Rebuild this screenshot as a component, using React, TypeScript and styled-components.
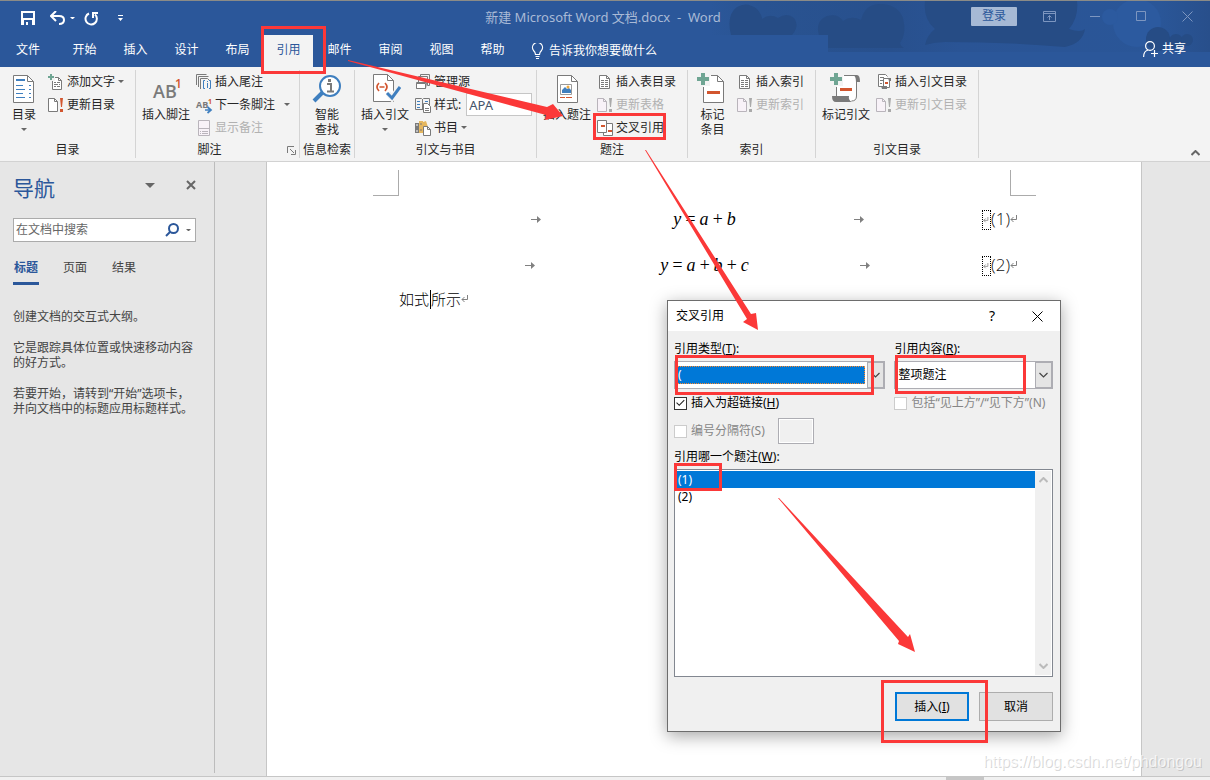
import React from "react";
import styled, { createGlobalStyle, css } from "styled-components";

const GlobalStyle = createGlobalStyle`
  * { box-sizing: border-box; }
  body {
    margin: 0;
    font-family: "Noto Sans", "Noto Sans CJK SC", sans-serif;
    font-size: 12px;
    line-height: 16px;
    color: #262626;
  }
  button, input, select { font: inherit; color: inherit; }
  button { background: none; border: 0; padding: 0; }
  h2, p, ul { margin: 0; padding: 0; }
  svg { display: block; flex: none; }
`;

const RED = "#fb3838";
const GRAY = "#7a7a7a";
const BLUE = "#3f7fbf";
const ORANGE = "#d2562f";
const GREEN = "#6fa593";
const FADED = "#b9b4bb";

const Window = styled.div`
  position: relative;
  min-height: 100vh;
  display: flex;
  flex-direction: column;
  background: #e6e6e6;
  overflow: hidden;
`;

/* ---------- header ---------- */

const Header = styled.header`
  position: relative;
  background: #2b579a;
  border-top: 1px solid #8b8b87;
`;

const Decoration = styled.svg`
  position: absolute;
  top: 0;
  right: 0;
`;

const TitleRow = styled.div`
  position: relative;
  display: grid;
  grid-template-columns: 1fr auto 1fr;
  align-items: center;
  height: 34px;
`;

const QuickAccess = styled.div`
  display: flex;
  align-items: center;
  padding-left: 20px;
`;

const QuickButton = styled.button<{ $w: number }>`
  width: ${(p) => p.$w}px;
  height: 20px;
  display: flex;
  align-items: center;
`;

const DocTitle = styled.div`
  padding: 0 4px 2px 0;
  font-size: 13px;
  color: #a9bad6;
  white-space: pre;
`;

const WindowControls = styled.div`
  display: flex;
  justify-content: flex-end;
  align-items: center;
  padding-bottom: 4px;
`;

const LoginButton = styled.button`
  width: 46px;
  height: 19px;
  margin-right: 9px;
  background: #a6b9d5;
  color: #2b579a;
  border-radius: 1px;
`;

const ControlButton = styled.button`
  width: 46px;
  height: 30px;
  display: flex;
  align-items: center;
  justify-content: center;
`;

const TabRow = styled.nav`
  position: relative;
  display: flex;
  align-items: stretch;
  gap: 2px;
  height: 32px;
  color: #fff;
`;

const Tab = styled.button<{ $active?: boolean; $file?: boolean }>`
  width: ${(p) => (p.$file ? 58 : 49)}px;
  padding: 0 ${(p) => (p.$file ? 2 : 0)}px 2px 0;
  ${(p) =>
    p.$active &&
    css`
      background: #f3f3f3;
      color: #2b579a;
    `}
`;

const TellMe = styled.button`
  display: flex;
  align-items: center;
  gap: 5px;
  margin-left: 12px;
`;

const ShareButton = styled.button`
  display: flex;
  align-items: center;
  gap: 4px;
  margin-left: auto;
  padding: 0 24px 4px 0;
`;

/* ---------- ribbon ---------- */

const Ribbon = styled.section`
  display: flex;
  height: 95px;
  padding: 3px 0 3px;
  background: #f3f3f3;
  border-bottom: 1px solid #d2d2d2;
`;

const Group = styled.div<{ $w: number }>`
  width: ${(p) => p.$w}px;
  flex: none;
  display: flex;
  flex-direction: column;
  border-right: 1px solid #d4d4d4;
`;

const GroupBody = styled.div`
  display: flex;
  flex: none;
  height: 72px;
`;

const GroupLabel = styled.div<{ $launcher?: boolean }>`
  display: flex;
  flex: none;
  align-items: center;
  justify-content: center;
  gap: 65px;
  height: 16px;
  padding-left: ${(p) => (p.$launcher ? 58 : 0)}px;
  white-space: nowrap;
`;

const BigButton = styled.button<{ $w: number }>`
  width: ${(p) => p.$w}px;
  flex: none;
  display: flex;
  flex-direction: column;
  align-items: center;
  padding-top: 1px;
  line-height: 15px;
  white-space: nowrap;
`;

const BigLabel = styled.span`
  margin-top: 4px;
  text-align: center;
`;

const BigCaret = styled.span`
  height: 15px;
  display: flex;
  align-items: center;
`;

const SmallColumn = styled.div`
  display: flex;
  flex-direction: column;
`;

const SmallButton = styled.button<{ $disabled?: boolean }>`
  display: flex;
  align-items: center;
  gap: 3px;
  height: 23px;
  white-space: nowrap;
  color: ${(p) => (p.$disabled ? "#b1b1b1" : "#262626")};
`;

const StyleField = styled.label`
  display: flex;
  align-items: center;
  gap: 3px;
  height: 23px;
  white-space: nowrap;
`;

const StyleInput = styled.input`
  width: 66px;
  height: 23px;
  margin-left: 2px;
  padding: 0 2px;
  background: #fff;
  border: 1px solid #c6c6c6;
  font-size: 13px;
  color: #44546a;
  outline: none;
`;

const CollapseButton = styled.button`
  margin-left: auto;
  align-self: flex-end;
  padding: 0 10px 2px 0;
`;

/* ---------- workspace ---------- */

const Workspace = styled.main`
  position: relative;
  flex: 1;
  display: flex;
`;

const NavPane = styled.aside`
  width: 215px;
  flex: none;
  margin-bottom: 3px;
  padding: 12px 18px 0 13px;
  border-right: 1px solid #bcbcbc;
  color: #444;
`;

const NavHeader = styled.div`
  display: flex;
  align-items: center;
  height: 28px;
  gap: 31px;
`;

const NavTitle = styled.h2`
  flex: 1;
  font-size: 21px;
  line-height: 28px;
  font-weight: 400;
  color: #2b579a;
`;

const IconButton = styled.button`
  display: flex;
  padding-bottom: 6px;
`;

const SearchBox = styled.label`
  display: flex;
  align-items: center;
  gap: 7px;
  height: 24px;
  margin-top: 16px;
  padding: 0 4px 0 2px;
  background: #fff;
  border: 1px solid #ababab;
`;

const SearchInput = styled.input`
  flex: 1;
  min-width: 0;
  padding: 0;
  border: 0;
  outline: none;
  background: none;
  &::placeholder { color: #666; opacity: 1; }
`;

const NavTabs = styled.div`
  display: flex;
  margin-top: 14px;
`;

const NavTab = styled.button<{ $active?: boolean }>`
  height: 29px;
  margin-right: 23px;
  padding-bottom: 2px;
  width: 26px;
  white-space: nowrap;
  border-bottom: 3px solid ${(p) => (p.$active ? "#2b579a" : "transparent")};
  ${(p) =>
    p.$active &&
    css`
      font-weight: 700;
      color: #2b579a;
    `}
`;

const NavText = styled.p`
  margin-top: 16px;
  line-height: 15px;
  white-space: nowrap;
`;

const NavHelp = styled.div`
  padding-top: 8px;
`;

const Page = styled.article`
  flex: 1;
  margin: 0 68px 0 51px;
  background: #fff;
  border: solid #c6c6c6;
  border-width: 0 1px;
`;

const PageCorners = styled.div`
  display: flex;
  justify-content: space-between;
  height: 34px;
  padding: 8px 105px 0 106px;
`;

const Corner = styled.span<{ $side: "left" | "right" }>`
  width: 26px;
  height: 26px;
  border-bottom: 1px solid #ababab;
  border-${(p) => (p.$side === "left" ? "right" : "left")}: 1px solid #ababab;
`;

const PageText = styled.div`
  padding: 0 131px 0 132px;
`;

const EquationRow = styled.div`
  display: grid;
  grid-template-columns: 1fr auto 1fr;
  align-items: center;
  height: 46px;
`;

const TabMark = styled.span`
  flex: 1;
  display: flex;
  justify-content: center;
`;

const Equation = styled.span`
  display: flex;
  gap: 3px;
  font: italic 18px/22px "Liberation Serif", serif;
  color: #000;
`;

const NumberCell = styled.div`
  display: flex;
  align-items: center;
  margin-right: -8px;
`;

const CaptionAnchor = styled.span`
  width: 9px;
  height: 20px;
  display: flex;
  align-items: center;
  margin-top: 2px;
  border: 1px dotted #000;
`;

const CaptionNumber = styled.span`
  font: 300 17px/22px "Open Sans", "Noto Sans", sans-serif;
  color: #111;
`;

const BodyLine = styled.p`
  display: flex;
  align-items: center;
  height: 22px;
  font-size: 15px;
  line-height: 22px;
  font-weight: 300;
  color: #000;
`;

const TextCursor = styled.span`
  width: 1px;
  height: 19px;
  margin-left: 1px;
  background: #000;
`;

const BottomBar = styled.footer`
  height: 4px;
  padding-left: 946px;
  background: #f1f1f1;
  border-top: 1px solid #c6c6c6;
`;

const BottomThumb = styled.div`
  width: 38px;
  height: 3px;
  background: #c6c6c6;
`;

/* ---------- dialog ---------- */

const Dialog = styled.section`
  position: absolute;
  top: 138px;
  left: 667px;
  width: 394px;
  background: #f0f0f0;
  border: 1px solid #6d6d6d;
  box-shadow: 0 4px 16px rgba(0, 0, 0, 0.35);
  color: #000;
`;

const DialogTitle = styled.div`
  display: flex;
  align-items: center;
  height: 30px;
  padding: 0 17px 0 8px;
  background: #fff;
`;

const DialogTitleText = styled.h2`
  flex: 1;
  font-size: 12px;
  font-weight: 400;
`;

const HelpButton = styled.button`
  font-size: 14px;
  margin-right: 37px;
`;

const DialogBody = styled.div`
  padding: 10px 7px 10px 6px;
`;

const FieldRow = styled.div`
  display: flex;
  gap: 9px;
`;

const FieldColumn = styled.div<{ $w: number }>`
  width: ${(p) => p.$w}px;
`;

const FieldLabel = styled.label`
  display: block;
  height: 16px;
`;

const Combo = styled.div`
  display: flex;
  height: 28px;
  margin-top: 4px;
  border: 1px solid #adadb3;
  background: #fff;
`;

const ComboSelect = styled.select<{ $highlight?: boolean }>`
  appearance: none;
  flex: 1;
  min-width: 0;
  margin: 4px 2px;
  padding: 0 1px;
  border: 0;
  outline: none;
  background: transparent;
  ${(p) =>
    p.$highlight &&
    css`
      background: #0078d7;
      color: #fff;
      outline: 1px dotted #ff8728;
      outline-offset: -1px;
    `}
`;

const ComboArrow = styled.span`
  width: 17px;
  display: flex;
  align-items: center;
  justify-content: center;
  background: #e4e4e4;
  border: 1px solid #adadb3;
`;

const CheckRow = styled.div`
  display: flex;
  align-items: center;
  height: 28px;
`;

const CheckLabel = styled.label<{ $disabled?: boolean }>`
  display: flex;
  align-items: center;
  gap: 4px;
  white-space: nowrap;
  color: ${(p) => (p.$disabled ? "#868686" : "#000")};
`;

const CheckBox = styled.input`
  appearance: none;
  position: relative;
  width: 13px;
  height: 13px;
  margin: 0;
  background: #fff;
  border: 1px solid #333;
  &:disabled { border-color: #ccc; }
  &:checked::after {
    content: "";
    position: absolute;
    inset: 1px;
    background: #222;
    clip-path: polygon(2% 50%, 10% 42%, 36% 68%, 88% 14%, 96% 22%, 36% 84%);
  }
`;

const SeparatorInput = styled.input`
  width: 36px;
  height: 26px;
  margin-left: 13px;
  background: #f0f0f0;
  border: 1px solid #adadb3;
  box-shadow: inset 0 0 0 1px #fff;
`;

const ListLabel = styled.div`
  height: 16px;
  margin-top: 4px;
`;

const ListBox = styled.div`
  display: flex;
  height: 208px;
  margin-top: 4px;
  padding: 1px;
  background: #fff;
  border: 1px solid #828790;
`;

const ListItems = styled.ul`
  flex: 1;
  list-style: none;
`;

const ListItem = styled.li<{ $selected?: boolean }>`
  height: 17px;
  padding: 0 2px;
  line-height: 17px;
  background: ${(p) => (p.$selected ? "#0078d7" : "transparent")};
  color: ${(p) => (p.$selected ? "#fff" : "#000")};
`;

const ListScroll = styled.div`
  width: 16px;
  display: flex;
  flex-direction: column;
  justify-content: space-between;
  align-items: center;
  padding: 6px 0;
  background: #f0f0f0;
`;

const DialogActions = styled.div`
  display: flex;
  justify-content: flex-end;
  gap: 10px;
  margin-top: 15px;
`;

const DialogButton = styled.button<{ $primary?: boolean }>`
  width: 74px;
  height: 29px;
  background: #e1e1e1;
  border: ${(p) => (p.$primary ? "2px solid #0078d7" : "1px solid #adadad")};
`;

/* ---------- annotations ---------- */

const AnnotationLayer = styled.svg`
  position: absolute;
  top: 0;
  left: 0;
  pointer-events: none;
`;

const Watermark = styled.div`
  position: absolute;
  right: 8px;
  bottom: 8px;
  font: 16px/20px "Liberation Sans", sans-serif;
  color: rgba(255, 255, 255, 0.7);
  text-shadow: 1px 1px 0 rgba(120, 120, 120, 0.3);
`;

/* ---------- icons ---------- */

const Caret = ({ color = "#666", w = 6 }: { color?: string; w?: number }) => (
  <svg width={w} height={w / 2} viewBox="0 0 6 3">
    <path d="M0 0h6L3 3z" fill={color} />
  </svg>
);

const Big = ({ children }: { children: React.ReactNode }) => (
  <svg width="32" height="32" fill="none">
    {children}
  </svg>
);

const Small = ({ children }: { children: React.ReactNode }) => (
  <svg width="16" height="16" fill="none">
    {children}
  </svg>
);

const TocIcon = () => (
  <Big>
    <path d="M5.500 4.500h14l6 6v21h-20z" fill="#fff" stroke={GRAY} />
    <path d="M19.500 4.500v6h6" stroke={GRAY} />
    <path d="M8 8h9v2H8z" fill={BLUE} />
    <path d="M8 14.500h7M8 18.500h9M8 22.500h7M8 26.500h9" stroke={BLUE} />
    <path d="M21 14.500h2M21 18.500h2M21 22.500h2M21 26.500h2" stroke={BLUE} />
  </Big>
);

const FootnoteIcon = () => (
  <svg width="32" height="32">
    <text x="3" y="27" fontFamily="Open Sans" fontWeight="600" fontSize="18" fill={GRAY}>AB</text>
    <text x="25" y="17" fontFamily="Open Sans" fontWeight="600" fontSize="12" fill={ORANGE}>1</text>
  </svg>
);

const SmartLookupIcon = () => (
  <Big>
    <path d="M12 21L3 30" stroke={BLUE} strokeWidth="4" />
    <circle cx="19" cy="15" r="10" fill="#fff" stroke={BLUE} strokeWidth="2" />
    <path d="M16 13h4v7M16 20.500h7" stroke={GRAY} strokeWidth="2" />
    <rect x="17" y="8" width="3" height="3" fill={GRAY} />
  </Big>
);

const CitationIcon = () => (
  <Big>
    <path d="M4.500 3.500h14l6 6v21h-20z" fill="#fff" stroke={GRAY} />
    <path d="M18.500 3.500v6h6" stroke={GRAY} />
    <path d="M10 12q-4 4 0 8M16 12q4 4 0 8M10.500 16h5" stroke={ORANGE} strokeWidth="1.700" />
    <path d="M19 22l4 5 8-11" stroke="#f3f3f3" strokeWidth="6" />
    <path d="M18 22l5 5 8-11" stroke={BLUE} strokeWidth="3" />
  </Big>
);

const CaptionIcon = () => (
  <Big>
    <path d="M6.500 4.500h14l6 6v21h-20z" fill="#fff" stroke={GRAY} />
    <path d="M20.500 4.500v6h6" stroke={GRAY} />
    <path d="M9.500 13.500h11v10h-11z" stroke="#9a9a9a" />
    <path d="M11 22v-3l3-3 2 2 2-1 2 2v3z" fill={BLUE} />
    <circle cx="17" cy="16" r="1.500" fill="#eda83c" />
    <path d="M9 26.500h5M15 26.500h6" stroke={ORANGE} />
  </Big>
);

const PlusBig = () => (
  <path d="M4 2h4v4h4v4H8v4H4v-4H0V6h4z" fill={GREEN} />
);

const MarkEntryIcon = () => (
  <Big>
    <path d="M6.500 4.500h14l6 6v21h-20z" fill="#fff" />
    <path d="M14 4.500h6.500l6 6v21h-20V16M20.500 4.500v6h6" stroke={GRAY} />
    <path d="M10 21.500h13" stroke={ORANGE} strokeWidth="3" />
    <path d="M0 1h13v14H0z" fill="#f3f3f3" />
    <PlusBig />
  </Big>
);

const MarkCitationIcon = () => (
  <Big>
    <path d="M6.500 4.500h20v20q0 6-5 6h-14z" fill="#fff" />
    <path d="M14 4.500h13M6.500 16v10M26.500 8v17q0 5-5 5" stroke={GRAY} />
    <path d="M23 4h4q3 0 3 7h-4q0-6-3-7z" fill={GRAY} />
    <path d="M2 25h17q-1 4 3 6H6q-4 0-4-6z" fill={GRAY} />
    <path d="M10 18.500h12" stroke={ORANGE} strokeWidth="3" />
    <path d="M0 1h13v14H0z" fill="#f3f3f3" />
    <PlusBig />
  </Big>
);

const AddTextIcon = () => (
  <Small>
    <path d="M4.500 3.500h6l3 3v9h-9z" fill="#fff" stroke={GRAY} />
    <path d="M10.500 3.500v3h3M6 8.500h2M9 8.500h3M6 10.500h4M11 10.500h1M6 12.500h2M9 12.500h3" stroke={GRAY} />
    <path d="M0 0h7v7H0z" fill="#f3f3f3" />
    <path d="M2 0h2v2h2v2H4v2H2V4H0V2h2z" fill={GREEN} />
  </Small>
);

const UpdateIcon = ({ faded = false }: { faded?: boolean }) => {
  const line = faded ? FADED : GRAY;
  const mark = faded ? "#aaa" : ORANGE;
  return (
    <Small>
      <path d="M.500 1.500h6l3 3v10h-9z" fill={faded ? "#f8f2f8" : "#fff"} stroke={line} />
      <path d="M6.500 1.500v3h3" stroke={line} />
      <path d="M12 1h3l-1 9h-1zM12 12h3v3h-3z" fill={mark} />
    </Small>
  );
};

const EndnoteIcon = () => (
  <Small>
    <path d="M.500 11V.500h10M2.500 13V2.500h10M4.500 15V4.500h7l3 3" stroke={GRAY} />
    <path d="M9 6.500H7.500v8H9M13 6.500h1.500v8H13" stroke={BLUE} />
    <path d="M11 7h1v1h-1zM11 9h1v5h-1z" fill={BLUE} />
  </Small>
);

const NextNoteIcon = () => (
  <svg width="16" height="16" overflow="visible">
    <text x="0" y="11" fontFamily="Open Sans" fontWeight="700" fontSize="9" fill={GRAY}>AB</text>
    <text x="12" y="7" fontFamily="Open Sans" fontWeight="700" fontSize="7" fill={ORANGE}>1</text>
    <path d="M9 13h5M11.500 10l3.500 3-3.500 3" fill="none" stroke={BLUE} strokeWidth="1.700" />
  </svg>
);

const ShowNotesIcon = () => (
  <Small>
    <path d="M2.500 .500h11v15h-11z" fill="#f8f2f8" stroke={FADED} />
    <path d="M2 8.500h12M4 11.500h1M6 11.500h6M4 13.500h1M6 13.500h6" stroke={FADED} />
  </Small>
);

const SourcesIcon = () => (
  <Small>
    <path d="M5.500 5V.500h9v11h-2M3.500 8V2.500h9v9M1.500 8.500h10l-1 6h-9z" stroke={GRAY} />
    <path d="M1.500 9.500h9v5h-9z" fill="#fff" stroke={GRAY} />
  </Small>
);

const StyleIcon = () => (
  <Small>
    <path d="M.500 1.500h6l1 1 1-1h6v7M.500 1.500v11h7M7.500 2v11" stroke={GRAY} />
    <path d="M2 4.500h3M2 7.500h3M2 10.500h3M10 4.500h3" stroke={BLUE} />
    <path d="M8.500 6.500h4l3 3v6h-7z" fill="#fff" stroke={GRAY} />
    <path d="M10 11.500h4M10 13.500h4" stroke={GRAY} />
  </Small>
);

const BibliographyIcon = () => (
  <Small>
    <path d="M0 3h4v10H0z" fill={GRAY} />
    <path d="M1 5h2M1 11h2" stroke="#fff" />
    <path d="M4 1h4v12H4z" fill="#e5b75f" />
    <path d="M8 2l3-1 2 6H8z" fill="#e5b75f" />
    <path d="M5 4h2M5 10h2" stroke={GRAY} />
    <path d="M8.500 6.500h4l3 3v6h-7z" fill="#fff" stroke={GRAY} />
    <path d="M12.500 6.500v3h3" stroke={GRAY} />
  </Small>
);

const ListDocIcon = () => (
  <Small>
    <path d="M2.500 1.500h7l3 3v10h-10z" fill="#fff" stroke={GRAY} />
    <path d="M9.500 1.500v3h3M4 6.500h3M8 6.500h3M4 8.500h3M8 8.500h3M4 10.500h3M8 10.500h3M4 12.500h3M8 12.500h3" stroke={GRAY} />
  </Small>
);

const CrossRefIcon = () => (
  <Small>
    <path d="M6.500 3.500h9v12h-9z" fill="#fff" stroke={GRAY} />
    <path d="M.500 .500h9v12h-9z" fill="#fff" stroke={GRAY} />
    <path d="M4 6h4M11 11h4" stroke={ORANGE} strokeWidth="2" />
  </Small>
);

const AuthoritiesIcon = () => (
  <Small>
    <path d="M8 12.500H2.500V.500h7l2 2" fill="#fff" stroke={GRAY} />
    <path d="M4 3.500h4M4 6.500h3M4 9.500h2" stroke={GRAY} />
    <path d="M7.500 4.500h6v9h-6z" fill="#fff" stroke={GRAY} />
    <path d="M12 4h3v3h-2zM5 12h6v3H6z" fill={GRAY} />
    <path d="M9 9h3" stroke={ORANGE} strokeWidth="2" />
  </Small>
);

const TabArrow = () => (
  <svg width="10" height="7">
    <path d="M0 3h6V0l4 3.500L6 7V4H0z" fill="#808080" />
  </svg>
);

const ReturnMark = ({ w = 8 }: { w?: number }) => (
  <svg width={w} height="8" viewBox="0 0 8 8" fill="none">
    <path d="M6.500 0v4.500H1M3.500 2L1 4.500 3.500 7" stroke="#808080" />
  </svg>
);

const Chevron = ({ up = false, color = "#444" }: { up?: boolean; color?: string }) => (
  <svg width="9" height="6" fill="none">
    <path d={up ? "M.500 5l4-4 4 4" : "M.500 1l4 4 4-4"} stroke={color} strokeWidth={color === "#444" ? 1.2 : 2} />
  </svg>
);

/* ---------- pieces ---------- */

const TabMarked = () => (
  <TabMark>
    <TabArrow />
  </TabMark>
);

const EquationLine = ({ terms, n }: { terms: string[]; n: number }) => (
  <EquationRow>
    <TabMarked />
    <Equation>
      {terms.map((t, i) => (
        <span key={i}>{t}</span>
      ))}
    </Equation>
    <NumberCell>
      <TabMarked />
      <CaptionAnchor>
        <ReturnMark w={6} />
      </CaptionAnchor>
      <CaptionNumber>({n})</CaptionNumber>
      <ReturnMark />
    </NumberCell>
  </EquationRow>
);

const ribbonTabs = ["开始", "插入", "设计", "布局", "引用", "邮件", "审阅", "视图", "帮助"];

export default function App() {
  return (
    <Window>
      <GlobalStyle />
      <Header>
        <Decoration width="500" height="51">
          <defs>
            <linearGradient id="sky" x1="0" x2="1">
              <stop offset="0" stopColor="#2b579a" />
              <stop offset="0.1" stopColor="#295391" />
              <stop offset="0.36" stopColor="#28508d" />
              <stop offset="0.5" stopColor="#2a5495" />
              <stop offset="0.9" stopColor="#2a5698" />
              <stop offset="1" stopColor="#284f8b" />
            </linearGradient>
          </defs>
          <path d="M0 0h500v51H118V34H0z" fill="url(#sky)" />
          <g transform="translate(20 0)">
            <circle cx="407" cy="22" r="24" fill="#2c5a9f" />
            <circle cx="380" cy="16" r="8" fill="#2c5a9f" />
            <g fill="#264c85">
              <path d="M1 34q-5-20 6-28 10-6 20 2 5 6 5 10 8-6 16-1 9-6 16 0 6 8-2 17z" />
              <path d="M89 34q-4-14 8-19 11-3 16 5 8-6 18-1 4-17 21-16 16 1 21 14 4 16-3 25 1 4 4 5H98V34z" />
              <path d="M195 0h152q2 16-8 28 12 4 16 0-2 14-20 18-60-5-120-5-10 0-20 3 2-10 10-16-12-10-10-28z" />
              <circle cx="428" cy="38" r="12" />
              <circle cx="446" cy="40" r="7" />
              <circle cx="457" cy="39" r="6" />
            </g>
          </g>
        </Decoration>
        <TitleRow>
          <QuickAccess>
            <QuickButton $w={30} aria-label="保存">
              <svg width="16" height="16" fill="none">
                <path d="M2 2h12v12H2z" stroke="#fff" strokeWidth="2" />
                <path d="M1 8h14v7H1z" fill="#fff" />
                <path d="M4 10h8v5H4z" fill="#2b579a" />
                <path d="M6 12h2v3H6z" fill="#fff" />
              </svg>
            </QuickButton>
            <QuickButton $w={20} aria-label="撤消">
              <svg width="15" height="14" fill="none">
                <path d="M1 5h8q5 0 5 4t-5 4" stroke="#fff" strokeWidth="2" />
                <path d="M6 0L1 5l5 5" stroke="#fff" strokeWidth="2" />
              </svg>
            </QuickButton>
            <QuickButton $w={14} aria-label="撤消选项">
              <Caret color="#fff" w={5} />
            </QuickButton>
            <QuickButton $w={34} aria-label="重复">
              <svg width="15" height="15" fill="none">
                <path d="M5 2.500A5.700 5.700 0 1 0 11 3.500" stroke="#fff" strokeWidth="2" />
                <path d="M9 7V2h5" stroke="#fff" strokeWidth="2" />
              </svg>
            </QuickButton>
            <QuickButton $w={8} aria-label="自定义快速访问工具栏">
              <svg width="5" height="6">
                <path d="M0 0h5v1H0zM0 3h5L2.500 6z" fill="#fff" />
              </svg>
            </QuickButton>
          </QuickAccess>
          <DocTitle>{"新建 Microsoft Word 文档.docx  -  Word"}</DocTitle>
          <WindowControls>
            <LoginButton>登录</LoginButton>
            <ControlButton aria-label="功能区显示选项">
              <svg width="13" height="11" fill="none" stroke="#7d96c0">
                <path d="M.500 .500h12v10H.500zM0 2.500h13M6.500 9V4.500M4.500 6.500l2-2 2 2" />
              </svg>
            </ControlButton>
            <ControlButton aria-label="最小化">
              <svg width="10" height="1">
                <path d="M0 0h10v1H0z" fill="#7d96c0" />
              </svg>
            </ControlButton>
            <ControlButton aria-label="最大化">
              <svg width="10" height="10" fill="none">
                <path d="M.500 .500h9v9h-9z" stroke="#7d96c0" />
              </svg>
            </ControlButton>
            <ControlButton aria-label="关闭">
              <svg width="11" height="11" fill="none">
                <path d="M.500 .500l10 10M10.500 .500l-10 10" stroke="#7d96c0" />
              </svg>
            </ControlButton>
          </WindowControls>
        </TitleRow>
        <TabRow>
          <Tab $file>文件</Tab>
          {ribbonTabs.map((t) => (
            <Tab key={t} $active={t === "引用"}>
              {t}
            </Tab>
          ))}
          <TellMe>
            <svg width="13" height="16" fill="none" stroke="#fff">
              <path d="M4.500 11.500q0-2-2-4a5 5 0 1 1 8 0q-2 2-2 4zM4.500 13.500h4M5 15.500h3" strokeWidth="1.200" />
            </svg>
            告诉我你想要做什么
          </TellMe>
          <ShareButton>
            <svg width="15" height="16" fill="none" stroke="#fff">
              <circle cx="7" cy="5" r="4.400" strokeWidth="1.200" />
              <path d="M.600 16q0-6 4.500-7M8 12.500h7M11.500 9v7" strokeWidth="1.200" />
            </svg>
            共享
          </ShareButton>
        </TabRow>
      </Header>

      <Ribbon>
        <Group $w={136}>
          <GroupBody>
            <BigButton $w={48}>
              <TocIcon />
              <BigLabel>目录</BigLabel>
              <BigCaret><Caret /></BigCaret>
            </BigButton>
            <SmallColumn>
              <SmallButton><AddTextIcon />添加文字<Caret /></SmallButton>
              <SmallButton><UpdateIcon />更新目录</SmallButton>
            </SmallColumn>
          </GroupBody>
          <GroupLabel>目录</GroupLabel>
        </Group>
        <Group $w={164}>
          <GroupBody>
            <BigButton $w={60}>
              <FootnoteIcon />
              <BigLabel>插入脚注</BigLabel>
            </BigButton>
            <SmallColumn>
              <SmallButton><EndnoteIcon />插入尾注</SmallButton>
              <SmallButton><NextNoteIcon />下一条脚注&nbsp;&nbsp;<Caret /></SmallButton>
              <SmallButton $disabled disabled><ShowNotesIcon />显示备注</SmallButton>
            </SmallColumn>
          </GroupBody>
          <GroupLabel $launcher>
            脚注
            <svg width="9" height="9" fill="none">
              <path d="M.500 7V.500H7M3 3l4 4M8.500 4v4.500H4" stroke={GRAY} />
            </svg>
          </GroupLabel>
        </Group>
        <Group $w={55}>
          <GroupBody>
            <BigButton $w={54}>
              <SmartLookupIcon />
              <BigLabel>智能<br />查找</BigLabel>
            </BigButton>
          </GroupBody>
          <GroupLabel>信息检索</GroupLabel>
        </Group>
        <Group $w={182}>
          <GroupBody>
            <BigButton $w={60}>
              <CitationIcon />
              <BigLabel>插入引文</BigLabel>
              <BigCaret><Caret /></BigCaret>
            </BigButton>
            <SmallColumn>
              <SmallButton><SourcesIcon />管理源</SmallButton>
              <StyleField><StyleIcon />样式:<StyleInput defaultValue="APA" /></StyleField>
              <SmallButton><BibliographyIcon />书目<Caret /></SmallButton>
            </SmallColumn>
          </GroupBody>
          <GroupLabel>引文与书目</GroupLabel>
        </Group>
        <Group $w={151}>
          <GroupBody>
            <BigButton $w={60}>
              <CaptionIcon />
              <BigLabel>插入题注</BigLabel>
            </BigButton>
            <SmallColumn>
              <SmallButton><ListDocIcon />插入表目录</SmallButton>
              <SmallButton $disabled disabled><UpdateIcon faded />更新表格</SmallButton>
              <SmallButton><CrossRefIcon />交叉引用</SmallButton>
            </SmallColumn>
          </GroupBody>
          <GroupLabel>题注</GroupLabel>
        </Group>
        <Group $w={128}>
          <GroupBody>
            <BigButton $w={49}>
              <MarkEntryIcon />
              <BigLabel>标记<br />条目</BigLabel>
            </BigButton>
            <SmallColumn>
              <SmallButton><ListDocIcon />插入索引</SmallButton>
              <SmallButton $disabled disabled><UpdateIcon faded />更新索引</SmallButton>
            </SmallColumn>
          </GroupBody>
          <GroupLabel>索引</GroupLabel>
        </Group>
        <Group $w={163}>
          <GroupBody>
            <BigButton $w={60}>
              <MarkCitationIcon />
              <BigLabel>标记引文</BigLabel>
            </BigButton>
            <SmallColumn>
              <SmallButton><AuthoritiesIcon />插入引文目录</SmallButton>
              <SmallButton $disabled disabled><UpdateIcon faded />更新引文目录</SmallButton>
            </SmallColumn>
          </GroupBody>
          <GroupLabel>引文目录</GroupLabel>
        </Group>
        <CollapseButton aria-label="折叠功能区">
          <Chevron up color="#666" />
        </CollapseButton>
      </Ribbon>

      <Workspace>
        <NavPane>
          <NavHeader>
            <NavTitle>导航</NavTitle>
            <IconButton aria-label="窗格选项"><Caret w={10} /></IconButton>
            <IconButton aria-label="关闭窗格">
              <svg width="10" height="10" fill="none">
                <path d="M1 1l8 8M9 1L1 9" stroke="#666" strokeWidth="2" />
              </svg>
            </IconButton>
          </NavHeader>
          <SearchBox>
            <SearchInput placeholder="在文档中搜索" aria-label="在文档中搜索" />
            <svg width="14" height="14" fill="none" stroke="#2b579a" strokeWidth="2">
              <circle cx="8.500" cy="5.500" r="4.500" />
              <path d="M5 9l-4 4" />
            </svg>
            <Caret w={5} />
          </SearchBox>
          <NavTabs>
            <NavTab $active>标题</NavTab>
            <NavTab>页面</NavTab>
            <NavTab>结果</NavTab>
          </NavTabs>
          <NavHelp>
            <NavText>创建文档的交互式大纲。</NavText>
            <NavText>它是跟踪具体位置或快速移动内容<br />的好方式。</NavText>
            <NavText>若要开始，请转到“开始”选项卡，<br />并向文档中的标题应用标题样式。</NavText>
          </NavHelp>
        </NavPane>
        <Page>
          <PageCorners>
            <Corner $side="left" />
            <Corner $side="right" />
          </PageCorners>
          <PageText>
            <EquationLine terms={["y", "=", "a", "+", "b"]} n={1} />
            <EquationLine terms={["y", "=", "a", "+", "b", "+", "c"]} n={2} />
            <BodyLine>
              如式
              <TextCursor />
              所示
              <ReturnMark />
            </BodyLine>
          </PageText>
        </Page>

        <Dialog role="dialog" aria-label="交叉引用">
          <DialogTitle>
            <DialogTitleText>交叉引用</DialogTitleText>
            <HelpButton>?</HelpButton>
            <button aria-label="关闭">
              <svg width="11" height="11" fill="none">
                <path d="M.500 .500l10 10M10.500 .500l-10 10" stroke="#000" />
              </svg>
            </button>
          </DialogTitle>
          <DialogBody>
            <FieldRow>
              <FieldColumn $w={212}>
                <FieldLabel htmlFor="ref-type">引用类型(<u>T</u>):</FieldLabel>
                <Combo>
                  <ComboSelect id="ref-type" $highlight defaultValue="(">
                    <option>(</option>
                  </ComboSelect>
                  <ComboArrow><Chevron /></ComboArrow>
                </Combo>
              </FieldColumn>
              <FieldColumn $w={159}>
                <FieldLabel htmlFor="ref-content">引用内容(<u>R</u>):</FieldLabel>
                <Combo>
                  <ComboSelect id="ref-content">
                    <option>整项题注</option>
                  </ComboSelect>
                  <ComboArrow><Chevron /></ComboArrow>
                </Combo>
              </FieldColumn>
            </FieldRow>
            <FieldRow>
              <FieldColumn $w={212}>
                <CheckRow>
                  <CheckLabel>
                    <CheckBox type="checkbox" defaultChecked />
                    <span>插入为超链接(<u>H</u>)</span>
                  </CheckLabel>
                </CheckRow>
              </FieldColumn>
              <FieldColumn $w={159}>
                <CheckRow>
                  <CheckLabel $disabled>
                    <CheckBox type="checkbox" disabled />
                    包括“见上方”/“见下方”(N)
                  </CheckLabel>
                </CheckRow>
              </FieldColumn>
            </FieldRow>
            <CheckRow>
              <CheckLabel $disabled>
                <CheckBox type="checkbox" disabled />
                编号分隔符(S)
              </CheckLabel>
              <SeparatorInput disabled aria-label="分隔符" />
            </CheckRow>
            <ListLabel id="caption-list">引用哪一个题注(<u>W</u>):</ListLabel>
            <ListBox>
              <ListItems role="listbox" aria-labelledby="caption-list">
                <ListItem role="option" aria-selected $selected>(1)</ListItem>
                <ListItem role="option">(2)</ListItem>
              </ListItems>
              <ListScroll>
                <Chevron up color="#bbb" />
                <Chevron color="#bbb" />
              </ListScroll>
            </ListBox>
            <DialogActions>
              <DialogButton $primary>插入(<u>I</u>)</DialogButton>
              <DialogButton>取消</DialogButton>
            </DialogActions>
          </DialogBody>
        </Dialog>
      </Workspace>

      <BottomBar>
        <BottomThumb />
      </BottomBar>

      <AnnotationLayer width="1210" height="780">
        <g fill="none" stroke={RED} strokeWidth="3">
          <path d="M262.500 27.500h62v45h-62z" />
          <path d="M594.500 114.500h70v24h-70z" />
          <path d="M676.500 356.500h196v37h-196z" />
          <path d="M896.500 356.500h128v36h-128z" />
          <path d="M675.500 464.500h45v25h-45z" />
          <path d="M882.500 681.500h104v60h-104z" />
        </g>
        <g fill={RED}>
          <path d="M348 60l199 47 6-3 10 12-18 4 1-5L348 61z" />
          <path d="M646 150l105 164 5-1 2 17-15-8 4-3-102-169z" />
          <path d="M779 498l129 139 2-3 5 18-17-8 1-3-121-143z" />
        </g>
      </AnnotationLayer>
      <Watermark>https://blog.csdn.net/phdongou</Watermark>
    </Window>
  );
}
